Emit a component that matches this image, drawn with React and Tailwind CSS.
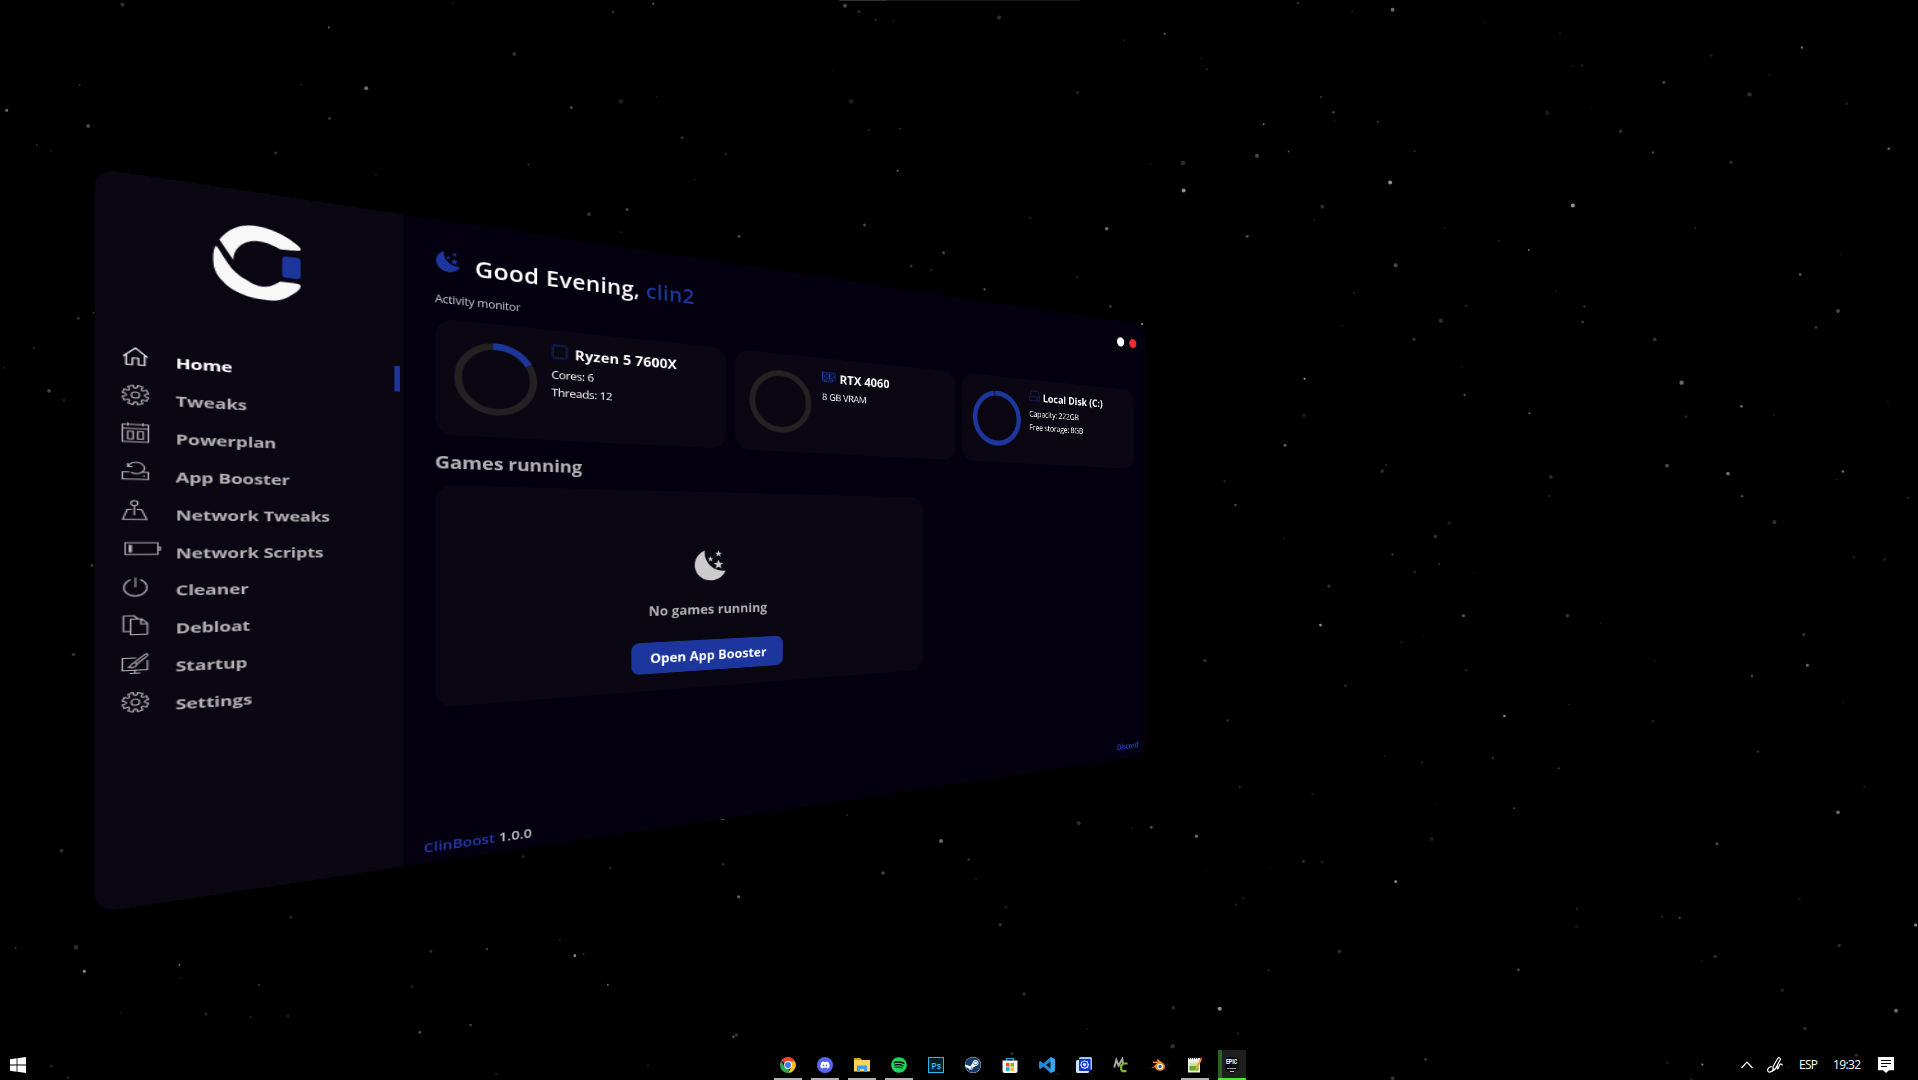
import React from "react";
import { FaDiscord, FaSpotify, FaSteam } from "react-icons/fa";

const SECTORS = [
  {
    ox: 0, oy: 0, sx: 0.6123, sy: 0.3444,
    stars: [
      [200, 14, 2, 2], [537, 80, 1, 4], [739, 10, 1, 1], [840, 157, 2, 2], [130, 246, 1, 2], [492, 247, 1, 1],
      [598, 256, 2, 4], [11, 320, 1.5, 4], [144, 366, 2, 3], [538, 344, 1.5, 2], [60, 420, 1, 2], [83, 437, 1, 1],
      [450, 444, 1.5, 2], [614, 508, 1, 1], [863, 478, 1, 2], [933, 312, 1.5, 3], [1014, 294, 2.5, 1], [1073, 282, 1, 1],
      [1067, 11, 1, 4], [1001, 35, 1.5, 2], [1380, 17, 2, 3], [1403, 34, 1.5, 2], [1430, 57, 1.5, 1], [1458, 62, 1, 1],
      [1390, 294, 2.5, 1], [1114, 400, 1.5, 2], [1185, 447, 1.5, 1], [1419, 378, 1, 2], [1470, 374, 1, 2], [1466, 496, 1, 4],
      [1134, 521, 1, 1], [962, 622, 2, 2], [1024, 608, 1.5, 3], [1014, 674, 1, 1], [1207, 686, 1.5, 3], [1412, 653, 1.5, 3],
      [1541, 734, 1.5, 3], [1488, 772, 1.5, 2], [1521, 784, 1, 2], [128, 924, 1.5, 2], [153, 908, 1, 2], [55, 1011, 1, 2],
      [80, 1135, 1.8, 3], [104, 1162, 1.5, 1], [6, 1068, 1, 1], [1361, 206, 1, 0],
    ],
  },
  {
    ox: 960, oy: 0, sx: 0.611, sy: 0.3444,
    stars: [
      [64, 51, 2, 2], [553, 9, 1.3, 2], [708, 28, 2, 4], [642, 33, 1, 1], [859, 65, 1, 1], [335, 98, 1, 4], [268, 117, 1, 1],
      [395, 170, 1.3, 0], [404, 201, 1, 2], [982, 96, 1, 1], [1229, 160, 1.7, 1], [1378, 138, 1.3, 4], [1003, 192, 1, 1],
      [1018, 190, 1, 2], [1152, 239, 1.5, 3], [1325, 217, 1, 1], [1292, 274, 2.2, 2], [1451, 301, 1.4, 1], [192, 269, 1.3, 2],
      [591, 282, 1.2, 2], [611, 326, 1.2, 3], [613, 352, 1, 1], [684, 354, 1.2, 2], [961, 328, 2.2, 1], [1033, 316, 1, 0],
      [497, 361, 1, 4], [1081, 381, 1.8, 2], [486, 452, 2, 3], [538, 440, 1, 3], [744, 439, 1, 2], [1134, 443, 1.3, 3],
      [1262, 471, 1.6, 2], [1520, 432, 1.3, 4], [312, 477, 1, 1], [365, 473, 2.2, 2], [366, 553, 2, 5], [704, 530, 2, 5],
      [1003, 597, 2, 5], [593, 600, 1.9, 2], [579, 639, 1, 1], [115, 632, 1.2, 1], [240, 664, 1.8, 4], [470, 686, 1.6, 3],
      [794, 661, 1.2, 0], [1203, 662, 1.3, 1], [882, 699, 1.2, 1], [931, 726, 1, 4], [1442, 739, 1, 1], [713, 770, 2, 3],
      [1375, 797, 1.2, 4], [192, 805, 1, 2], [40, 840, 1.1, 4], [645, 851, 1.2, 1], [975, 846, 1, 1], [829, 888, 1, 2],
      [246, 890, 1.2, 3], [1022, 890, 1.3, 2], [1437, 903, 1.9, 3], [787, 931, 2.2, 2], [1019, 935, 1.2, 3], [1401, 951, 1.4, 2],
      [298, 941, 1.1, 5], [625, 945, 1, 1], [743, 985, 1.7, 2], [1137, 986, 2, 2], [564, 1100, 1.1, 5], [822, 1067, 1, 1],
      [1181, 1111, 2.2, 4], [826, 1147, 1.2, 3], [1519, 1168, 1.2, 0], [1279, 1180, 1.3, 4], [563, 1206, 1.8, 1],
      [932, 1200, 1, 4], [1188, 1210, 1.1, 2], [1332, 1206, 1.1, 1], [532, 1293, 1.4, 4], [697, 1350, 1.1, 2],
      [691, 1368, 1.8, 2], [967, 1385, 1.8, 2], [1157, 1352, 1.9, 3], [1257, 1375, 1.9, 4], [1445, 1369, 1.3, 4],
      [1436, 1392, 1, 1], [433, 1397, 1, 2], [964, 1440, 1, 2], [1280, 1441, 1.3, 3], [1551, 1445, 1, 2], [451, 1466, 1.2, 3],
      [801, 1519, 1.8, 1], [1333, 1516, 2.1, 2], [778, 1558, 1.9, 2], [531, 1563, 1, 1],
    ],
  },
  {
    ox: 960, oy: 540, sx: 0.611, sy: 0.3444,
    stars: [
      [708, 42, 1.2, 2], [784, 70, 1.1, 2], [744, 92, 1.2, 2], [841, 96, 1, 0], [604, 134, 1.6, 2], [1463, 50, 1.4, 1],
      [1513, 56, 1.6, 1], [824, 220, 1.8, 3], [994, 220, 2, 2], [590, 247, 1.4, 5], [1049, 241, 1, 1], [1381, 275, 1.7, 2],
      [723, 296, 2, 0], [757, 283, 1, 0], [401, 350, 1.7, 2], [1387, 364, 1.5, 4], [829, 378, 1, 2], [1137, 350, 1.4, 0],
      [1296, 395, 1.2, 3], [631, 423, 1.3, 2], [1445, 472, 1.4, 0], [997, 478, 1, 1], [891, 511, 1.2, 5], [438, 524, 1.3, 2],
      [1134, 527, 1.4, 1], [1306, 614, 1.2, 2], [695, 627, 1, 1], [872, 633, 1.3, 2], [756, 646, 1.2, 1], [980, 663, 1.2, 2],
      [458, 717, 1.1, 2], [577, 738, 1.1, 1], [1480, 717, 1, 1], [780, 769, 1, 0], [907, 779, 1, 3], [1437, 791, 1.8, 4],
      [194, 822, 1.9, 2], [313, 834, 1.5, 3], [281, 838, 1, 1], [387, 860, 1.6, 4], [772, 868, 2, 1], [1239, 882, 1.6, 3],
      [562, 933, 1.5, 2], [593, 935, 1.4, 1], [14, 928, 1.2, 2], [26, 985, 1, 1], [403, 957, 1, 0], [510, 954, 1, 0],
      [713, 992, 1.4, 5], [464, 1040, 1, 2], [452, 1059, 1.2, 1], [1374, 1043, 1.2, 1], [1010, 1071, 1, 2], [75, 1067, 1, 2],
      [1149, 1094, 1.1, 2], [1178, 1097, 1.1, 3], [66, 1117, 1.8, 2], [1564, 1118, 1.5, 5], [1009, 1122, 1.4, 1],
      [1439, 1177, 1.6, 2], [621, 1195, 1.7, 2], [1236, 1209, 1.7, 2], [1215, 1223, 1, 1], [505, 1249, 1.4, 1],
      [914, 1248, 1.4, 3], [105, 1318, 1.7, 2], [1346, 1307, 1.9, 1], [349, 1358, 1.7, 2], [425, 1361, 2.1, 5],
      [1532, 1367, 2, 4], [208, 1420, 1, 1], [1383, 1418, 1.7, 2], [455, 1432, 1.2, 1], [348, 1470, 2.2, 2],
      [85, 1491, 1.6, 2], [1467, 1496, 1.6, 2], [762, 1508, 1.2, 3], [1158, 1518, 1.3, 1], [1215, 1523, 1, 5],
      [708, 1563, 2, 2], [1197, 1565, 1.2, 1], [340, 1522, 1.1, 1], [160, 1550, 1.2, 1], [1356, 1530, 1, 1],
    ],
  },
  {
    ox: 0, oy: 700, sx: 0.4847, sy: 0.3333,
    stars: [
      [127, 452, 2, 2], [600, 652, 1.2, 2], [32, 743, 1, 2], [157, 742, 2.2, 2], [174, 814, 1.5, 5], [370, 795, 1, 4],
      [373, 833, 1.1, 1], [534, 855, 1.2, 2], [889, 754, 1.4, 2], [1005, 747, 1.1, 3], [850, 860, 1.7, 1], [1155, 719, 1, 1],
      [1186, 767, 1.4, 5], [1204, 762, 1, 2], [1254, 854, 1, 4], [249, 940, 1, 1], [425, 943, 1.2, 2], [517, 952, 1.3, 1],
      [594, 948, 1, 2], [866, 997, 1.5, 3], [971, 975, 1.2, 3], [1519, 1005, 1.9, 2], [1513, 1011, 1.1, 4], [106, 1099, 1.8, 1],
      [140, 1133, 1.2, 2], [1024, 1122, 1.3, 1], [1337, 1097, 1.3, 1], [1079, 470, 1.8, 1], [1259, 504, 1.8, 1],
      [1492, 493, 1, 3], [1491, 356, 1.3, 4], [1524, 590, 1.5, 4],
    ],
  },
  {
    ox: 0, oy: 0, sx: 1, sy: 1,
    stars: [
      [92, 565.5, 1.2, 3], [73.5, 654.5, 1.8, 2], [847, 815, 0.9, 2], [1079, 823, 1.6, 2], [941, 841, 2, 4],
      [969, 859.5, 1.2, 2], [883, 873, 1.7, 3], [723, 864, 0.9, 2],
    ],
  },
];
const STAR_TONES = ["#0d0d0d", "#1a1a1a", "#2e2e2e", "#484848", "#6a6a6a", "#8e8e8e"];

function Stars() {
  return (
    <svg className="absolute inset-0" width="1918" height="1080" aria-hidden="true">
      {SECTORS.map((s, i) =>
        s.stars.map(([x, y, r, t], j) => (
          <circle key={`${i}-${j}`} cx={s.ox + x * s.sx} cy={s.oy + y * s.sy} r={Math.max(0.8, r)} fill={STAR_TONES[t]} />
        ))
      )}
      <rect x="839" y="0" width="48" height="1" fill="#303030" />
      <rect x="887" y="0" width="193" height="1" fill="#161616" />
    </svg>
  );
}

const ring = (cx, cy, pts) =>
  pts.map(([r, a], i) => `${i ? "L" : "M"}${(cx + r * Math.sin(a)).toFixed(2)} ${(cy - r * Math.cos(a)).toFixed(2)}`).join("") + "Z";

function cog() {
  const pts = [];
  for (let i = 0; i < 8; i++) {
    const a = (i + 0.5) * (Math.PI / 4);
    pts.push([7.1, a - 0.26], [9.7, a - 0.2], [9.7, a + 0.2], [7.1, a + 0.26], [6.7, a + 0.39]);
  }
  return ring(10, 10, pts);
}

function star(cx, cy, r) {
  const pts = [];
  for (let i = 0; i < 10; i++) pts.push([i % 2 ? r * 0.42 : r, (i * Math.PI) / 5]);
  return ring(cx, cy, pts);
}

const COG = (
  <>
    <path d={cog()} />
    <circle cx="10" cy="10" r="3" />
  </>
);

const NAV = [
  { label: "Home", icon: <path d="M1 10.3 10 1.8l9 8.500M3.200 8.600v9.600h4.600v-6.400h4.400v6.400h4.600V8.600" /> },
  { label: "Tweaks", icon: COG },
  {
    label: "Powerplan",
    icon: <path d="M.5 2h19v17H.5zM.5 6h19M4.500.300v3.200M15.500.300v3.200M4.300 8.800h4v7.400h-4zM11.700 8.800h4v7.400h-4z" />,
  },
  {
    label: "App Booster",
    icon: (
      <>
        <path d="M5.800 10.700H.5V17.800h19v-7.100h-5.300M4.300 2v3.500h3.600M4.800 5.200a6 5.600 0 1 1 2 5.800" />
        <path d="M15.500 14.500h1.500" />
      </>
    ),
  },
  {
    label: "Network Tweaks",
    icon: (
      <>
        <circle cx="9.200" cy="3.300" r="2.500" />
        <path d="M9.200 5.800v9.400M7.400 9.500H4L.700 19.300h17.600L14.500 9.500H11" />
      </>
    ),
  },
  {
    label: "Network Scripts",
    wide: true,
    icon: (
      <>
        <path d="M.5 4.200h24v11.600H.5zM24.500 8.500h1.700v3h-1.700" />
        <path d="M3 6.300h2.500v7.400H3z" fill="currentColor" stroke="none" />
      </>
    ),
  },
  { label: "Cleaner", icon: <path d="M10 .5v9.500M6.500 2.600a8.400 8.400 0 1 0 7 0" /> },
  {
    label: "Debloat",
    icon: <path d="M6.500 16.300H1.300V1h7.500l2.500 2.600M6.500 4.300h8l4.300 4.400v10.800H6.500zM14 4.300v4.900h4.800M8.800 1l3.600 3.300" />,
  },
  {
    label: "Startup",
    icon: <path d="M10.500 4.500H.5v12h18.300V7M6 19.500h7.500M9.700 16.500v3M18.300.700c1.500.800.300 2.300-.500 3.200l-6.500 6.600-2-1.700L16.500 1.800c.600-.600 1.200-1.300 1.800-1.100ZM9 9.300c-2.500.200-1.500 3-4 4 2.500 1.300 5.700.300 6-2.500" />,
  },
  { label: "Settings", icon: COG },
];

function Logo() {
  return (
    <svg className="ml-[87.300px] mt-[33px] h-[79px] w-[72px]" viewBox="87 33 72 79" aria-label="ClinBoost">
      <path
        fill="#f8f8f8"
        d="M92.300 53.400C99 42 108 35 119.500 34.700C133 34.500 145 40.500 152 46.500C156 49.500 159 52.500 158 54C157.300 55.300 150 55.500 141 55.800C135 52 129 50 122 50.200C113.500 51 103.800 58 103.300 72.700Z"
      />
      <path
        fill="#f8f8f8"
        d="M89.700 60.600C91 60.500 95 71 102 81.400C106 86.500 110 89.500 113.900 91.700C119 95.500 123 97 127.300 96.700C133 96.500 137 93 141 89.600C149 89.300 156.500 89 158 91C158.700 94 156 97.500 151.900 101C146 107 140 109.800 134.100 110.200C126 110.700 117 109.500 111.200 107C104 104.500 98.500 100.500 95.400 96.100C89.500 90 87.500 82 87.600 75.200C87.300 68 88.500 61 89.700 60.600Z"
      />
      <rect x="142.700" y="62.400" width="15.400" height="22.300" rx="3.500" fill="#1c369d" />
    </svg>
  );
}

function Moon({ className }) {
  return (
    <svg className={className} viewBox="0 0 40 40" fill="currentColor" aria-hidden="true">
      <path d="M13.500.800A20 20 0 1 0 39.600 26.700A23 23 0 0 1 13.500.800Z" />
      <path d={star(30.5, 5.2, 4.4)} />
      <path d={star(20.5, 12, 3.7)} />
      <path d={star(30.5, 19, 6.3)} />
    </svg>
  );
}

function Gauge({ value }) {
  const r = 37.8;
  const c = 2 * Math.PI * r;
  return (
    <svg className="size-[83px] shrink-0" viewBox="0 0 83 83" fill="none" strokeWidth="7.4" aria-hidden="true">
      <circle cx="41.500" cy="41.500" r={r} stroke="#222222" />
      {value > 0 && (
        <circle cx="41.500" cy="41.500" r={r} stroke="#1c369d" strokeDasharray={`${c * value} ${c}`} transform="rotate(-95 41.500 41.500)" />
      )}
    </svg>
  );
}

const CHIP = (
  <svg className="h-[18px] w-[18px]" viewBox="0 0 18 18" fill="none" stroke="#1c369d" aria-hidden="true">
    <rect x="2" y="2" width="14" height="14" rx="1.500" strokeWidth="0.7" />
    <rect x="0.800" y="0.800" width="16.400" height="16.400" rx="2" strokeWidth="1" strokeDasharray="1 1.500" />
  </svg>
);
const GPU = (
  <svg className="h-[16px] w-[20px]" viewBox="0 0 20 16" fill="none" stroke="#1c369d" strokeWidth="1" aria-hidden="true">
    <path d="M.5 1v14M2 2h17v10H2zM3.500 12v2.500h11V12" />
    <circle cx="6.500" cy="7" r="3" />
    <circle cx="14.500" cy="7" r="3" />
    <path d="M5 5.500l3 3M13 5.500l3 3M10.500 3v8" />
  </svg>
);
const DISK = (
  <svg className="h-[17px] w-[20px]" viewBox="0 0 20 17" fill="none" stroke="#1c369d" strokeWidth="0.7" aria-hidden="true">
    <path d="M1 10 4.500 1h11L19 10v6H1zM1 10h18M13 13h3" />
  </svg>
);

const CARDS = [
  { title: "Ryzen 5 7600X", lines: ["Cores: 6", "Threads: 12"], value: 0.18, icon: CHIP },
  { title: "RTX 4060", lines: ["8 GB VRAM"], value: 0, icon: GPU },
  { title: "Local Disk (C:)", lines: ["Capacity: 222GB", "Free storage: 8GB"], value: 0.986, icon: DISK },
];

function Card({ title, lines, value, icon }) {
  return (
    <div className="flex h-[130px] flex-1 rounded-[18px] bg-[#0a0712] pt-[22px] pl-[18px]">
      <Gauge value={value} />
      <div className="-mt-[8px] ml-[15px] flex flex-col">
        <div className="flex h-[26.500px] items-start">
          <div className="flex h-[21px] w-[25px] items-center">{icon}</div>
          <div className="text-[16.500px] leading-[26px] font-bold tracking-[0.040px] whitespace-nowrap text-white">{title}</div>
        </div>
        {lines.map((l) => (
          <div key={l} className="h-[21.500px] pt-[1px] text-[13px] leading-[21.500px] tracking-[-0.400px] whitespace-nowrap text-white">
            {l}
          </div>
        ))}
      </div>
    </div>
  );
}

function BoosterWindow() {
  return (
    <div className="absolute top-0 left-0 flex h-[720px] w-[1280px] origin-top-left overflow-hidden rounded-[16px] bg-[#05000f] [transform:matrix3d(1.47227,0.307747,0,0.000569375,0,1.03389,0,0,0,0,1,0,95,168.3,0,1)]">
      <aside className="flex w-[248px] flex-col bg-[#0a0713]">
        <Logo />
        <nav className="mt-[48.400px] flex flex-col">
          {NAV.map((n, i) => (
            <div key={n.label} className={`flex h-[37.820px] items-center pl-[18.700px] ${i === 0 ? "text-white" : "text-[#b2b2b2]"}`}>
              <div className={n.wide ? "flex w-[40px] pb-[1px] pl-[2px]" : "flex w-[40px] pb-[1px]"}>
                <svg
                  className={n.wide ? "h-[20px] w-[27px]" : "h-[20px] w-[20px]"}
                  viewBox={n.wide ? "0 0 27 20" : "0 0 20 20"}
                  fill="none"
                  stroke="currentColor"
                  strokeWidth="1.100"
                  aria-hidden="true"
                >
                  {n.icon}
                </svg>
              </div>
              <span className="pt-[6.400px] text-[15px] leading-[22px] font-bold tracking-[-0.120px]">{n.label}</span>
              {i === 0 && <span className="mt-[6px] mr-[3px] ml-auto h-[28px] w-[5px] bg-[#1c369d]" />}
            </div>
          ))}
        </nav>
      </aside>

      <main className="flex flex-1 flex-col pt-[21px] pr-[24px] pl-[30px]">
        <header className="flex h-[50px] items-center">
          <Moon className="size-[24px] text-[#1c369d]" />
          <h1 className="ml-[14px] pt-[6px] text-[25px] leading-[32px] font-semibold tracking-[0.320px] whitespace-nowrap text-white">
            Good Evening, <span className="text-[#1c369d]">clin2</span>
          </h1>
          <div className="-mr-[6px] mt-[5px] ml-auto flex gap-[10px] self-start">
            <span className="size-[15px] rounded-full bg-white" />
            <span className="size-[15px] rounded-full bg-[#ee2a2d]" />
          </div>
        </header>
        <p className="mt-[8.500px] -ml-[0.500px] h-[18px] text-[12px] leading-[18px] tracking-[-0.250px] text-[#c8c8c8]">Activity monitor</p>
        <section className="mt-[13.500px] flex gap-[12px]">
          {CARDS.map((c) => (
            <Card key={c.title} {...c} />
          ))}
        </section>
        <h2 className="mt-[16.500px] -ml-[0.500px] h-[28px] text-[20px] leading-[28px] font-bold tracking-[-0.220px] text-[#b0b0b0]">
          Games running
        </h2>
        <section className="mt-[12.500px] flex h-[249px] w-[596px] flex-col items-center rounded-[18px] bg-[#0a0712] pt-[74px]">
          <Moon className="size-[40px] text-[#cccccc]" />
          <p className="mt-[24.300px] -ml-[1px] text-[16px] leading-[24px] font-bold tracking-[0.050px] whitespace-nowrap text-[#b0b0b0]">
            No games running
          </p>
          <button className="mt-[27px] h-[39px] w-[188px] rounded-[9px] bg-[#1c369d] pt-[1px] text-[16px] font-bold whitespace-nowrap text-white">
            Open App Booster
          </button>
        </section>
        <footer className="mt-auto mb-[8px] -mr-[10px] -ml-[11px] flex items-end justify-between">
          <p className="text-[15px] leading-[20px] font-semibold text-[#c4c4c4]">
            <span className="text-[#1e3cae]">ClinBoost</span> 1.0.0
          </p>
          <p className="pb-[4px] text-[13px] leading-[18px] font-semibold tracking-[-0.500px] text-[#2040c0]">Discord</p>
        </footer>
      </main>
    </div>
  );
}

const Svg = ({ children, vb = "0 0 16 16" }) => (
  <svg className="size-4" viewBox={vb} aria-hidden="true">
    {children}
  </svg>
);

const APPS = [
  {
    name: "chrome",
    open: true,
    icon: (
      <Svg>
        <path d="M8 8 1.100 4A8 8 0 0 1 14.900 4L8 4.200Z" fill="#ea4335" />
        <path d="M8 4.200h6.900A8 8 0 0 1 8 16l3.400-6Z" fill="#fbc116" />
        <path d="M1.100 4 4.600 10l3.400 2 1.600.8L8 16A8 8 0 0 1 1.100 4Z" fill="#2da94f" />
        <circle cx="8" cy="8" r="3.900" fill="#fff" />
        <circle cx="8" cy="8" r="3" fill="#3a7df0" />
      </Svg>
    ),
  },
  {
    name: "discord",
    open: true,
    icon: (
      <span className="flex size-4 items-center justify-center rounded-full bg-[#5865f2]">
        <FaDiscord className="size-[10px] text-white" />
      </span>
    ),
  },
  {
    name: "explorer",
    open: true,
    icon: (
      <Svg>
        <path d="M0 1h6.500L8 3H0z" fill="#e09b17" />
        <path d="M0 3h16v11.500H0z" fill="#fbd35e" />
        <path d="M3 8.500h10v6.500h-3v-3H6v3H3z" fill="#3f9fe0" />
      </Svg>
    ),
  },
  { name: "spotify", open: true, icon: <FaSpotify className="size-4 text-[#1ed760]" /> },
  {
    name: "photoshop",
    icon: (
      <span className="flex size-4 items-center justify-center border border-[#26b8f0] bg-[#001d2c] font-['Open_Sans',sans-serif] text-[9px] leading-none font-semibold text-[#31c5f4]">
        Ps
      </span>
    ),
  },
  {
    name: "steam",
    icon: (
      <span className="flex size-4 items-center justify-center rounded-full bg-white">
        <FaSteam className="size-4 text-[#14386b]" />
      </span>
    ),
  },
  {
    name: "store",
    icon: (
      <Svg>
        <path d="M4.500 4V1.500h7V4" fill="none" stroke="#1fa2e0" strokeWidth="1.200" />
        <path d="M.5 3.500h15v10.500a2 2 0 0 1-2 2h-11a2 2 0 0 1-2-2z" fill="#f3f3f3" />
        <path d="M4 6h3.500v3.500H4z" fill="#f25022" />
        <path d="M8.500 6H12v3.500H8.500z" fill="#7fba00" />
        <path d="M4 10.300h3.500v3.500H4z" fill="#00a4ef" />
        <path d="M8.500 10.300H12v3.500H8.500z" fill="#ffb900" />
      </Svg>
    ),
  },
  {
    name: "vscode",
    icon: (
      <Svg>
        <path d="M11.500 0 16 2v12l-4.500 2L4.300 9.600 1.400 12 0 11.200V4.800L1.400 4l2.900 2.400zM11.700 4.400 7 8l4.700 3.600z" fill="#1f8ad6" fillRule="evenodd" />
        <path d="M11.500 0 16 2v12l-4.500 2z" fill="#35a6f0" />
      </Svg>
    ),
  },
  {
    name: "virtual-desktop",
    icon: (
      <Svg>
        <rect x="3" y="0" width="13" height="13" rx="1.500" fill="#9cc4fb" />
        <rect x="0" y="3" width="13" height="13" rx="1.500" fill="#cfe2ff" />
        <rect x="3" y="2" width="11.500" height="12" rx="1" fill="#0c34c8" />
        <path d="M8.500 3.200 10 4l1.700.2.300 1.700 1.200 1.400-.800 1.600-.200 1.800-1.700.4-1.500 1-1.600-.8-1.800-.2-.5-1.700L4 8l.8-1.600.2-1.700 1.800-.4z" fill="#e4eeff" />
        <circle cx="8.500" cy="7.600" r="2.300" fill="none" stroke="#1443d8" strokeWidth="1.400" />
      </Svg>
    ),
  },
  {
    name: "mc-tool",
    icon: (
      <Svg>
        <path d="M1.300 10.500 3.300 3l2.300 5.500L9.300 2l.7 4.500" fill="none" stroke="#a3a9a0" strokeWidth="2" />
        <path d="M14.500 6.500h-4.300L8.200 8.700v3.800l1.400 1.700h3.900M6.500 8.700h2.800" fill="none" stroke="#80b536" strokeWidth="2.200" />
      </Svg>
    ),
  },
  {
    name: "blender",
    icon: (
      <Svg>
        <path d="M1 11.500 8 6H3V4.500h5L6.500 2.800l1.400-.6 6 4.800z" fill="#f08b1d" />
        <ellipse cx="10" cy="9.500" rx="5" ry="4.300" fill="#f08b1d" />
        <circle cx="10" cy="9.500" r="2.800" fill="#fff" />
        <circle cx="10" cy="9.500" r="1.700" fill="#235a9b" />
      </Svg>
    ),
  },
  {
    name: "notepad",
    open: true,
    icon: (
      <Svg>
        <path d="M1 1h12v14.500H1z" fill="#f2f2ee" />
        <path d="M2.500 5.500h9v8h-9z" fill="#c9e39a" />
        <path d="M2.500 9h9v4.500h-9z" fill="#62ab1e" />
        <path d="M2 1.500h10" stroke="#555" strokeWidth="1.500" strokeDasharray="1 1" />
        <path d="M9 12.500 14 2" stroke="#e8a72e" strokeWidth="2" />
        <path d="M14 2.300 14.800.500" stroke="#c33" strokeWidth="2" />
      </Svg>
    ),
  },
];

function Taskbar() {
  return (
    <div className="absolute inset-x-0 bottom-0 flex h-[30px] items-center font-['Open_Sans','Noto_Sans',sans-serif] text-white">
      <svg className="ml-[10px] size-4" viewBox="0 0 16 16" fill="#fff" aria-label="Start">
        <path d="M0 2.200 6.600 1.300V7.600H0zM7.400 1.200 16 0v7.600H7.400zM0 8.400h6.600v6.300L0 13.800zM7.400 8.400H16V16l-8.600-1.200z" />
      </svg>
      <div className="ml-[744px] flex h-full">
        {APPS.map((a) => (
          <div key={a.name} className="flex h-full w-[36.950px] flex-col items-center pt-[7px]">
            {a.icon}
            {a.open && <span className="mt-auto h-[2px] w-[28px] bg-[#b4b2b0]" />}
          </div>
        ))}
        <div className="ml-[4.500px] flex h-full w-[28px] flex-col items-center border-b-2 border-b-[#4fe33a] bg-[#1f1f1f] bg-[linear-gradient(to_right,#2a6326_4px,transparent_4px)] pt-[7px]">
          <span className="flex h-[16px] w-[14px] flex-col items-center rounded-t-[2px] bg-[#0b0b0b] pt-[2px] font-['Roboto',sans-serif] text-white [clip-path:polygon(0_0,100%_0,100%_80%,50%_100%,0_80%)]">
            <span className="scale-x-[.75] scale-y-[1.150] text-[7px] leading-[7px] font-bold">EPIC</span>
            <span className="mt-[2px] h-px w-[9px] bg-[#9a9a9a]" />
            <span className="mt-[2px] h-px w-[4px] bg-[#c8c8c8]" />
          </span>
        </div>
      </div>
      <div className="mr-[24px] ml-auto flex items-center text-[12px] leading-4">
        <svg className="w-[12px]" viewBox="0 0 12 8" fill="none" stroke="#fff" strokeWidth="1.200" aria-hidden="true">
          <path d="M.5 7 6 1.200 11.500 7" />
        </svg>
        <svg className="ml-[14px] size-4" viewBox="0 0 16 16" fill="none" stroke="#fff" strokeWidth="1.200" aria-hidden="true">
          <path d="M6 9.800 10.800 1.300c1-1.300 3.200-.200 2.400 1.500L7.900 12.600l-2.100 1.300zM4.700 9.600C.8 9.400-.4 13.800 1.800 15c2.200 1 3.700-1.300 5.200-3.700M10.800 8.200c-.800 2.200-1 4.400.300 3.300 1.200-1.300 1-4.500 2.500-4.700 1.300 0 .600 1.400 2.200 1.200" />
        </svg>
        <span className="ml-[16px] w-[18px] tracking-[-0.700px] whitespace-nowrap">ESP</span>
        <span className="ml-[16px] w-[27px] tracking-[-0.600px] whitespace-nowrap">19:32</span>
        <svg className="ml-[18px] size-4" viewBox="0 0 16 16" aria-hidden="true">
          <path d="M0 0h16v13.300h-5L8 16l-3-2.700H0z" fill="#fff" />
          <path d="M3 3.500h10M3 6.500h10M3 9.500h6" stroke="#000" />
        </svg>
      </div>
    </div>
  );
}

export default function App() {
  return (
    <div className="relative h-[1080px] w-[1918px] overflow-hidden bg-black font-['Open_Sans','Noto_Sans',sans-serif]">
      <Stars />
      <BoosterWindow />
      <Taskbar />
    </div>
  );
}
